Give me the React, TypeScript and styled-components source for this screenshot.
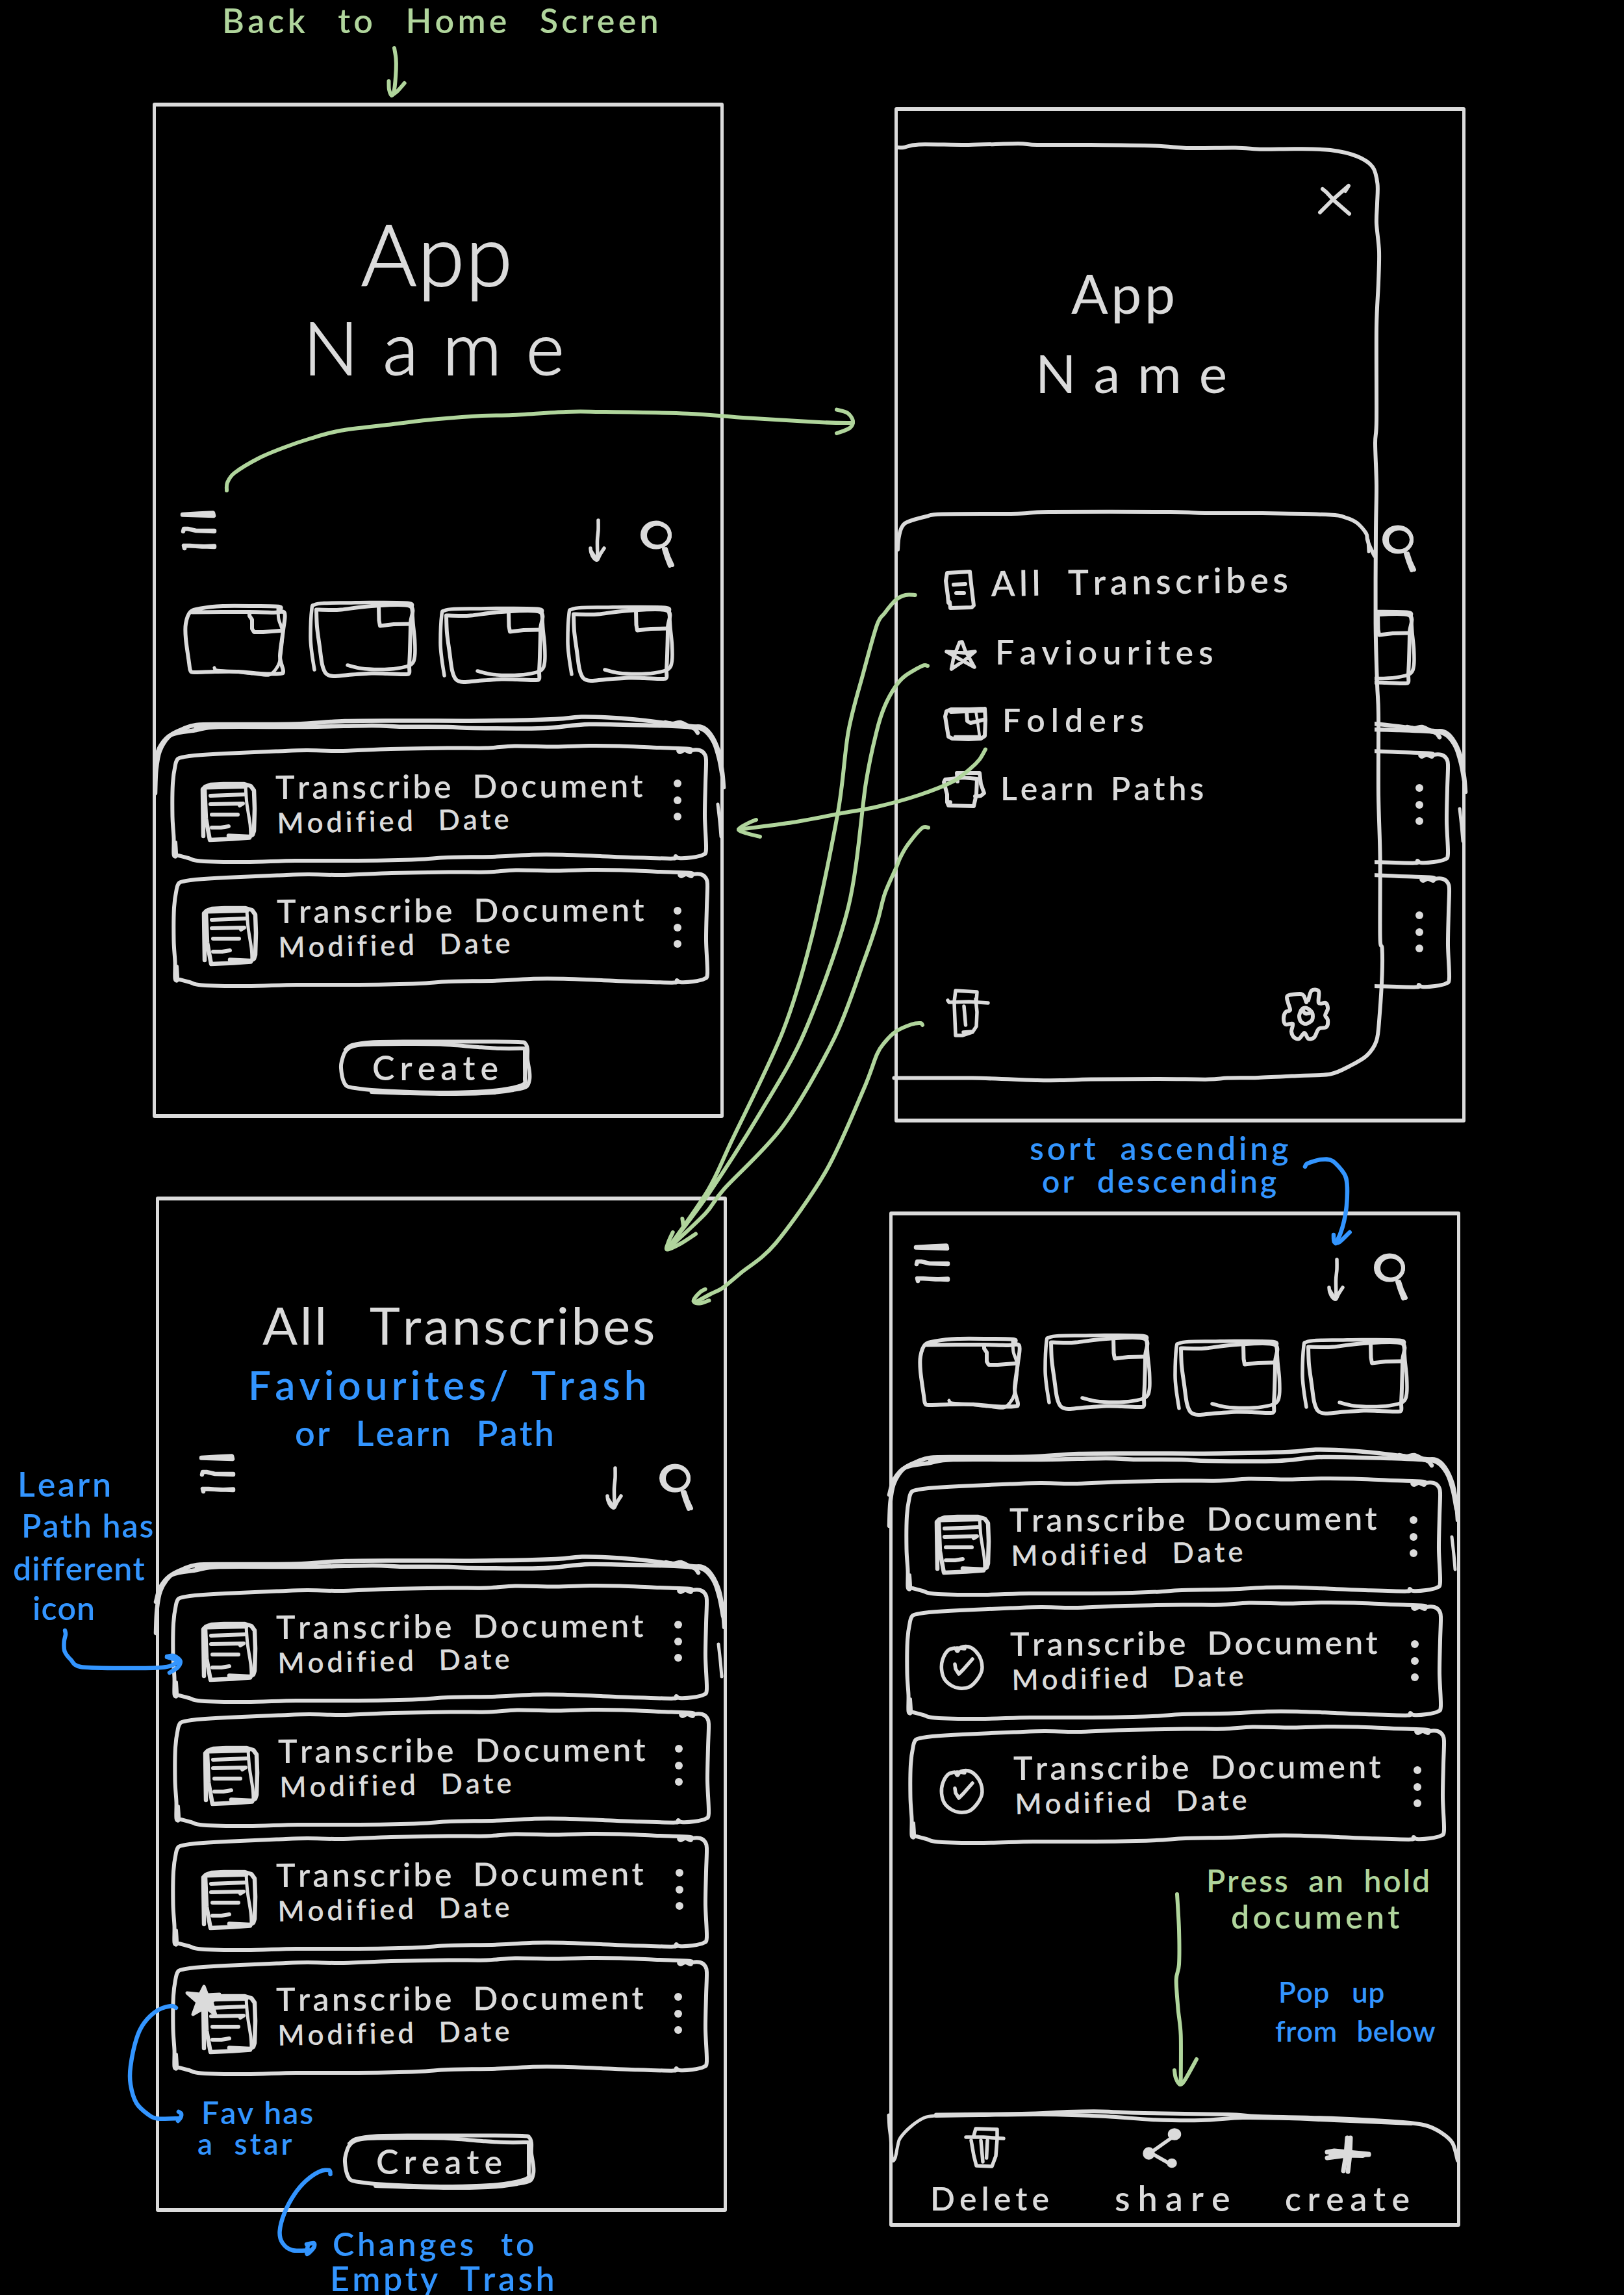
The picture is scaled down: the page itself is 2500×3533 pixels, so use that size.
import React from "react";
import styled, { createGlobalStyle } from "styled-components";

const CHALK = "#dbdbdb";
const GREEN = "#b0d59c";
const BLUE = "#3395ff";

const GlobalStyle = createGlobalStyle`
  html, body { margin: 0; padding: 0; background: #000; }
  *, *::before, *::after { box-sizing: border-box; }
`;

/* ---------- pen strokes ---------- */

const toPoints = (src: string) =>
  src.trim().split(/\s+/).map((p) => p.split(",").map(Number) as [number, number]);

/** Catmull-Rom spline through a list of "x,y" points. */
const spline = (src: string) => {
  const p = toPoints(src);
  const k = 6.5;
  let d = `M${p[0][0]} ${p[0][1]}`;
  for (let i = 0; i < p.length - 1; i++) {
    const a = p[i - 1] ?? p[i];
    const b = p[i];
    const c = p[i + 1];
    const e = p[i + 2] ?? c;
    d += ` C${b[0] + (c[0] - a[0]) / k} ${b[1] + (c[1] - a[1]) / k} ${c[0] - (e[0] - b[0]) / k} ${
      c[1] - (e[1] - b[1]) / k
    } ${c[0]} ${c[1]}`;
  }
  return d;
};

const straight = (src: string) => "M" + toPoints(src).map((q) => q.join(" ")).join(" L");

const Drawing = styled.svg<{ $w: number; $h: number; $ink?: string; $pen?: number }>`
  display: block;
  flex: none;
  width: ${(p) => p.$w}px;
  height: ${(p) => p.$h}px;
  overflow: visible;
  fill: none;
  stroke: ${(p) => p.$ink ?? CHALK};
  stroke-width: ${(p) => p.$pen ?? 6};
  stroke-linecap: round;
  stroke-linejoin: round;
`;

const Backdrop = styled(Drawing)`
  position: absolute;
  left: 0;
  top: 0;
  pointer-events: none;
`;

const Curve = ({ at, w }: { at: string; w?: number }) => <path d={spline(at)} strokeWidth={w} />;
const Line = ({ at, w }: { at: string; w?: number }) => <path d={straight(at)} strokeWidth={w} />;

/* ---------- icons ---------- */

const MenuIcon = () => (
  <Drawing $w={58} $h={62} $pen={6.5}>
    <Line at="5,6 30,4.5 52,3.5 53,8 5,6.5" />
    <Line at="6,32 7,28 13,28 26,31 54,31 54,32 26,31" />
    <Line at="8,58 7,54 16,54 35,55.5 54,54.5 54,56 10,54" />
  </Drawing>
);

const DownIcon = () => (
  <Drawing $w={30} $h={66} $pen={5.5}>
    <Curve at="16,2 16,17 14.5,34 15,60" />
    <Curve at="4,45 5,52 9,60 14.5,63 18,56 25,45" />
    <Line at="5,48 12,59" w={4} />
  </Drawing>
);

const SearchIcon = () => (
  <Drawing $w={54} $h={73}>
    <ellipse cx={25} cy={21.5} rx={21} ry={19} />
    <ellipse cx={27} cy={22} rx={19} ry={17.5} />
    <Line at="37,43 41,56 46,69" />
    <Line at="40,43 44,55 50,68" />
  </Drawing>
);

const DocIcon = () => (
  <Drawing $w={86} $h={93} $pen={6.5}>
    <Line at="5,84 4.5,50 4,12 8,8 16,5 36,4 68,4 78,7 83,14 84,42 83,76 81,82 76,85 44,83.5" />
    <Line at="7,12 9,57 15,90 49,88.5 76,86.5" />
    <Curve at="70,8 72,34 77,66 78,84" w={5} />
    <Line at="8,9 70,7.5" w={7} />
    <Line at="16,22 68,20" w={6} />
    <Line at="16,35 66,34 61,37" w={6} />
    <Line at="18,51 58,51" w={6} />
    <Line at="18,71 32,71 44,69" w={6} />
  </Drawing>
);

const StarMark = styled.svg`
  position: absolute;
  left: 20px;
  top: 43px;
  width: 56px;
  height: 50px;
  overflow: visible;
  fill: ${CHALK};
  stroke: ${CHALK};
  stroke-width: 5;
  stroke-linejoin: round;
`;

const CheckIcon = () => (
  <Drawing $w={67} $h={68} $pen={5.5}>
    <Curve at="22,4 12,8 4,22 2.5,37 7,52 18,62 30,66 45,64 57,53 64.5,38 63,22 55,9 44,2 32,3 27,9 25,4 38,5" />
    <Line at="23,29 24,36 29,44 36,37 50,21" />
  </Drawing>
);

const CloseIcon = () => (
  <Drawing $w={50} $h={48}>
    <Line at="6,7 12,12 24,25 47,45" />
    <Line at="2,43 22,23 46,2 41,10" />
  </Drawing>
);

const ListIcon = () => (
  <Drawing $w={50} $h={62} $pen={6}>
    <Line at="10,50 8,51 7,40 4,17 6,5 41,3 43,22 47,55 44,58 11,59 10,50" />
    <Line at="16,23 34,22" />
    <Line at="20,36 32,36" />
  </Drawing>
);

const StarIcon = () => (
  <Drawing $w={50} $h={48} $pen={5.5}>
    <Line at="10.6,45 14,27 23,4 27,3 32,17 46,42 22,29 3,18 30,20 47,18 30,32 10.6,45" />
  </Drawing>
);

const FolderMiniIcon = () => (
  <Drawing $w={68} $h={52} $pen={6}>
    <Line at="64,3 40,4 12,4 5,7 3,15 8,46 14,49 39,50 58,49 64,45 65,20 64,3" />
    <Line at="12,8 60,6" />
    <Line at="36,7 37,22 42,25 62,20" />
    <Line at="50,6 53,24 56,46 18,46" w={4.5} />
  </Drawing>
);

const PagesIcon = () => (
  <Drawing $w={68} $h={57} $pen={6}>
    <Line at="14,48 9,48 11,53 50,54 54,36 55,12 34,10 6,13 4,17 9,36 9,48" />
    <Line at="25,16 24,3 59,3 61,20 66,34 61,38 52,39" />
  </Drawing>
);

const BinIcon = () => (
  <Drawing $w={68} $h={76} $pen={5.5}>
    <Line at="13,20 15,3 48,5 47,19" />
    <Line at="3,18 5,21 36,20 65,22" />
    <Line at="13,23 15,72 26,72 41,67 47,58 48,36 46,16" />
    <Line at="28,27 30.5,56" />
    <Line at="27,67 41,66" />
  </Drawing>
);

const GearIcon = () => (
  <Drawing $w={74} $h={80} $pen={6}>
    <Curve at="38,21 34,11 28,8 9,11 10,22 13,33 6,36 3,46 6,55 17,54 15,66 19,75 27,77 35,68 41,77 50,75 57,62 69,59 71,48 67,41 71,31 68,22 57,22 57,4 46,3 41,18" />
    <Curve at="30,33 27,42 30,51 38,54 47,48 47,37 39,30 32,31 36,38 42,38" />
  </Drawing>
);

const DeleteIcon = () => (
  <Drawing $w={64} $h={64} $pen={5.5}>
    <Line at="15,14 18,3 51,4 51,16" />
    <Line at="3,16 30,16 61,18" />
    <Line at="11,21 15,44 19,60 43,61 49,45 51,19" />
    <Line at="26,21 29,54" />
    <Line at="36,21 34.6,48" />
  </Drawing>
);

const ShareIcon = () => (
  <Drawing $w={60} $h={62} $pen={5.5}>
    <Line at="46,14 12,38 42,55" />
    <ellipse cx={49} cy={9.5} rx={7.5} ry={6.5} fill={CHALK} />
    <ellipse cx={9.5} cy={39} rx={6.5} ry={7} fill={CHALK} />
    <ellipse cx={45} cy={54} rx={5} ry={4.5} fill={CHALK} />
  </Drawing>
);

const PlusIcon = () => (
  <Drawing $w={73} $h={60} $pen={7}>
    <Line at="36,4 34,30 30,55" />
    <Line at="41,4 40,30 37,56" />
    <Line at="5,26 16,24 69,29" />
    <Line at="5,35 35,31 69,30" />
    <Line at="12,29 60,30" w={10} />
  </Drawing>
);

/* ---------- text ---------- */

const Hand = styled.p<{
  $size: number;
  $line: number;
  $track?: number;
  $word?: number;
  $weight?: number;
  $outline?: number;
  $left?: number;
  $top?: number;
  $tilt?: number;
  $ink?: string;
}>`
  margin: ${(p) => p.$top ?? 0}px 0 0 ${(p) => p.$left ?? 0}px;
  font-family: Lato, "Open Sans", sans-serif;
  font-size: ${(p) => p.$size}px;
  font-weight: ${(p) => p.$weight ?? 600};
  line-height: ${(p) => p.$line}px;
  letter-spacing: ${(p) => p.$track ?? 0}px;
  word-spacing: ${(p) => p.$word ?? 0}px;
  font-kerning: none;
  white-space: nowrap;
  color: ${(p) => p.$ink ?? CHALK};
  -webkit-text-stroke: ${(p) => p.$outline ?? 0}px ${(p) => p.$ink ?? CHALK};
  ${(p) => (p.$tilt ? `transform: rotate(${p.$tilt}deg); transform-origin: 0 100%;` : "")}
`;

/* ---------- board ---------- */

const Board = styled.main`
  position: relative;
  display: flex;
  gap: 264px;
  width: 2500px;
  height: 3533px;
  padding: 158px 0 0 235px;
  overflow: hidden;
  background: #000;
`;

const Column = styled.div<{ $top: number; $gap: number }>`
  display: flex;
  flex-direction: column;
  flex: none;
  gap: ${(p) => p.$gap}px;
  width: 878px;
  padding-top: ${(p) => p.$top}px;
`;

const Frame = styled.section<{ $shift?: number }>`
  position: relative;
  display: flex;
  flex: none;
  flex-direction: column;
  width: 879px;
  height: 1563px;
  margin-left: ${(p) => p.$shift ?? 0}px;
  border: 6px solid ${CHALK};
  border-width: 6px 5px 6px 5px;
  border-radius: 3px;
`;

const Hero = styled.header`
  display: flex;
  flex-direction: column;
  height: 622px;
  padding-top: 156px;
`;

const Heading = styled.header`
  display: flex;
  flex-direction: column;
  height: 390px;
  padding-top: 143px;
`;

const Toolbar = styled.nav<{ $top?: number; $left: number; $right: number; $gap: number }>`
  display: flex;
  flex: none;
  align-items: flex-start;
  gap: ${(p) => p.$gap}px;
  height: 90px;
  margin-top: ${(p) => p.$top ?? 0}px;
  padding: 0 ${(p) => p.$right}px 0 ${(p) => p.$left}px;
`;

const ToolSlot = styled.span<{ $top?: number; $push?: boolean }>`
  display: block;
  padding-top: ${(p) => p.$top ?? 0}px;
  margin-left: ${(p) => (p.$push ? "auto" : "0")};
`;

const FolderRow = styled.div<{ $left: number }>`
  display: flex;
  flex: none;
  align-items: flex-start;
  height: 128px;
  margin-top: 49px;
  padding-left: ${(p) => p.$left}px;
`;

const FolderSlot = styled.span<{ $gap: number; $top: number }>`
  display: block;
  margin: ${(p) => p.$top}px 0 0 ${(p) => p.$gap}px;
`;

const FirstFolder = () => (
  <Drawing $w={160} $h={112} $pen={6}>
    <Curve at="149,10 149,4 110,3 62,3 27,6.7 12,12 5,30 5,53 10,90 12,102 18,105 50,104 86,104 120,107 150,107 155,103 150,80 155,40 157,13.5 140,13 103,12 60,12 15,12.5" />
    <Curve at="147,5 148,23 154,43 152,70 149,90 143,101 133,109 109,107 80,104 53,102 49,98" w={5} />
    <Line at="103,14 103,18 107,24 107,38 110,43 124,43 150,41" />
  </Drawing>
);

const Folder = () => (
  <Drawing $w={166} $h={120} $pen={6}>
    <Curve at="8,106 4,80 2,55 4,12 8,6 23,3.5 60,3 96,2.5 153,3.5 158,12 160,35 162.5,60 162.5,85 157,98 135,104 108,105.5 80,104 59,99" w={5.5} />
    <Curve at="11,13.5 30,14 49,13.5 96,8 155,8 156,35 155,78 154,100 154,111 148,113 120,112 96,111.5 60,114 37.5,116 26,112 20,98 16,70 12,40 11,13.5" />
    <Line at="107,8 107.5,30 109,38.5 130,36 155,35.6" />
  </Drawing>
);

const folderSlots = [
  { gap: 0, top: 5 },
  { gap: 35, top: 0 },
  { gap: 34, top: 9 },
  { gap: 30, top: 7 },
];

const Folders = ({ left }: { left: number }) => (
  <FolderRow $left={left}>
    {folderSlots.map((s, i) => (
      <FolderSlot key={i} $gap={s.gap} $top={s.top}>
        {i === 0 ? <FirstFolder /> : <Folder />}
      </FolderSlot>
    ))}
  </FolderRow>
);

const Tools = (props: { top?: number; left: number; right: number; gap: number; drop: number }) => (
  <Toolbar $top={props.top} $left={props.left} $right={props.right} $gap={props.gap}>
    <ToolSlot><MenuIcon /></ToolSlot>
    <ToolSlot $top={props.drop} $push><DownIcon /></ToolSlot>
    <ToolSlot $top={16}><SearchIcon /></ToolSlot>
  </Toolbar>
);

const Sheet = styled.div<{ $top: number; $left: number }>`
  position: relative;
  display: flex;
  flex: none;
  flex-direction: column;
  gap: 8px;
  width: 878px;
  margin: ${(p) => p.$top}px 0 0 ${(p) => p.$left}px;
  padding: 46px 0 0 29px;
`;

const SheetEdge = () => (
  <Backdrop $w={878} $h={200} $pen={6.5}>
    <Curve at="4,121 5.5,85 11,56 26,33 47,22 67,16 114,15 220,14.5 296,10 396,9.5 513,9.5 619,7 660,3.5 701,4.5 742,7.5 789,13 830,20 839,28" />
    <Curve at="4,73 11,50 29,31 67,24 102,19 237,19 337,17 384,18.7 454,19 496,21 601,21 672,15 777,17 824,19 845,19 859,30.5 871,56 877,89 879,112" />
    <Curve at="67,19 110,16 230,17" w={7} />
    <Curve at="789,12 801,14 812,12 824,17 836,19 851,25.5 864,43 872,68 877,95" />
    <Curve at="870,138 873,165 875,188" w={5} />
  </Backdrop>
);

const Card = styled.article<{ $nudge?: number }>`
  position: relative;
  display: flex;
  flex: none;
  align-items: flex-start;
  width: 826px;
  height: 183px;
  margin-left: ${(p) => p.$nudge ?? 0}px;
`;

const CardEdge = () => (
  <Backdrop $w={826} $h={183} $pen={6}>
    <Curve at="6,151 7,171 3.5,169 3.5,144 1.5,111 2,60 6,31 10,22 18,19.5 35,17 82,14 161,10.6 208,9 261,10 337,7 425,5.5 484,5.5 528,2.5 590,3.5 643,2 690,2.5 742,4.7 793,6.4 798,8 781,9 783,12 790,9 798,12 801,9 813,9 820,14 823,24 822,60 821,111 823,161 818,170 801,174 781,175 776,172 772,175.6 707,174 660,172 602,169.7 555,169.7 502,172.6 425,174 390,176.4 349,178 285,179 191,179 114,181 44,179.4 26,175 7,170" />
  </Backdrop>
);

const CardIcon = styled.div<{ $x: number; $y: number }>`
  flex: none;
  width: 160px;
  padding: ${(p) => p.$y}px 0 0 ${(p) => p.$x}px;
`;

const CardText = styled.div`
  flex: none;
  width: 609px;
  padding-top: 37px;
`;

const Dots = styled.div<{ $top: number; $left: number }>`
  display: flex;
  flex-direction: column;
  gap: 13.5px;
  padding: ${(p) => p.$top}px 0 0 ${(p) => p.$left}px;

  i {
    width: 12px;
    height: 12px;
    border-radius: 50%;
    background: ${CHALK};
  }
`;

type DocProps = {
  kind?: "doc" | "check";
  starred?: boolean;
  blank?: boolean;
  nudge?: number;
  dots?: number;
  dotX?: number;
  checkX?: number;
};

const DocumentCard = ({ kind = "doc", starred, blank, nudge, dots = 54, dotX = 4, checkX = 52 }: DocProps) => (
  <Card $nudge={nudge}>
    <CardEdge />
    <CardIcon $x={kind === "doc" ? 44 : checkX} $y={kind === "doc" ? 57 : 68}>
      {!blank && (kind === "doc" ? <DocIcon /> : <CheckIcon />)}
    </CardIcon>
    {starred && (
      <StarMark>
        <path d="M29 3 L34 16 L53 15 L41 27 L47 47 L31 35 L12 46 L19 27 L3 13 L23 15 Z" />
      </StarMark>
    )}
    <CardText>
      {!blank && (
        <>
          <Hand $size={50} $line={56} $track={4.2} $word={12} $tilt={-0.3}>Transcribe Document</Hand>
          <Hand $size={44} $line={50} $track={4.7} $word={18} $left={3} $top={2} $tilt={-1.1}>Modified Date</Hand>
        </>
      )}
    </CardText>
    <Dots $top={dots} $left={dotX}>
      <i /><i /><i />
    </Dots>
  </Card>
);

const CreateButton = styled.button<{ $top: number; $left: number }>`
  position: relative;
  flex: none;
  width: 298px;
  height: 87px;
  margin: ${(p) => p.$top}px 0 0 ${(p) => p.$left}px;
  padding: 0 0 0 53px;
  border: 0;
  background: transparent;
  text-align: left;
`;

const Create = ({ top, left }: { top: number; left: number }) => (
  <CreateButton $top={top} $left={left}>
    <Backdrop $w={298} $h={87} $pen={6}>
      <Curve at="288,14 250,14 216,12 158,7.5 100,7 40,8 20,12 11,20 6,34 5,44 8,62 14,72 30,75.5 52,78 111,81 170,82 228,80 262,76 286,69 288,60 288,40 288,23 288,14" />
      <Curve at="12,16 22,9 52,4.5 111,3.5 200,3.5 278,4 289,7 292,15 292,31 295,50 295,62 290,73 270,78 240,82 181,84 111,83 52,81" />
    </Backdrop>
    <Hand as="span" $size={52} $line={87} $track={8}>Create</Hand>
  </CreateButton>
);

/* ---------- screens ---------- */

/** `covered` leaves out whatever the open drawer hides. */
const HomeContent = ({ covered }: { covered?: boolean }) => (
  <>
    <Hero>
      {!covered && (
        <>
          <Hand $size={130} $line={140} $weight={300} $outline={2} $left={316} $track={2}>App</Hand>
          <Hand $size={112} $line={130} $weight={300} $outline={2} $left={227} $top={9} $track={38}>Name</Hand>
        </>
      )}
    </Hero>
    <Tools left={36} right={70} gap={50} drop={13} />
    <Folders left={41} />
    <Sheet $top={47} $left={-5}>
      <SheetEdge />
      <DocumentCard blank={covered} />
      <DocumentCard blank={covered} nudge={2} dots={59} dotX={2} />
    </Sheet>
    {!covered && <Create top={80} left={280} />}
  </>
);

const Drawer = styled.aside`
  position: absolute;
  left: 0;
  top: 0;
  display: flex;
  flex-direction: column;
  width: 734px;
  height: 1500px;
  padding-top: 113px;
  background: #000;
`;

const DrawerEdge = styled(Backdrop)`
  left: -5px;
  top: -6px;
`;

const CloseRow = styled.div`
  display: flex;
  justify-content: flex-end;
  padding-right: 36px;
`;

const DrawerTitle = styled.div`
  margin-top: 69px;
`;

const MenuList = styled.ul`
  display: flex;
  flex-direction: column;
  gap: 41px;
  margin: 243px 0 0;
  padding: 0 0 0 66px;
  list-style: none;
`;

const MenuItem = styled.li`
  display: flex;
  align-items: center;
  height: 64px;
`;

const MenuGlyph = styled.span<{ $x: number; $y: number }>`
  flex: none;
  width: 70px;
  padding: ${(p) => p.$y}px 0 0 ${(p) => p.$x}px;
`;

const DrawerFooter = styled.div`
  display: flex;
  justify-content: space-between;
  margin-top: 277px;
  padding: 0 69px 0 74px;
`;

const menu = [
  { icon: <ListIcon />, x: 4, y: 20, label: "All Transcribes", left: 8, size: 54, track: 6.4, word: 16, tilt: -0.8 },
  { icon: <StarIcon />, x: 6, y: 12, label: "Faviourites", left: 14, size: 52, track: 8, word: 0, tilt: 0 },
  { icon: <FolderMiniIcon />, x: 4, y: 12, label: "Folders", left: 25, size: 50, track: 9, word: 0, tilt: 0 },
  { icon: <PagesIcon />, x: 1, y: 4, label: "Learn Paths", left: 22, size: 50, track: 4.9, word: 4, tilt: 0 },
];

const DrawerPanel = () => (
  <Drawer>
    <DrawerEdge $w={760} $h={1510} $pen={6}>
      <Curve at="5,62 14,62 37.5,57.4 114,58 190,56 219.5,58 302,58 401,59.5 454,63 525,62.6 566,64.8 618.5,64.3 671,66 712,75.6 736,92 743.5,118 743,148.5 742,179 746,222 745,270 742,339 742,482 740,517 742,582 741,655 740.6,795 743,888 745,934 745,1059 747.6,1155 747.6,1278 750.6,1294.6 750.6,1335 746.5,1401 742,1437 727,1460 701,1476 671,1488.5 624,1491 560,1494 513,1494.6 483.5,1496.6 407,1496 302,1496.6 260.6,1498 219.5,1498 120,1494.6 -0.6,1494.6" />
      <Curve at="5,681 6.5,663 11,647 20,638.6 49,630 73,626.4 190,625.7 237,623 425,623 478,625 566,625 671,627.5 695,632 712,640 726,656 728,666 732,677 739,691" />
      <Line at="729,666 730,684" w={5} />
    </DrawerEdge>
    <CloseRow><CloseIcon /></CloseRow>
    <DrawerTitle>
      <Hand $size={84} $line={100} $weight={400} $left={267} $track={4.5}>App</Hand>
      <Hand $size={82} $line={100} $weight={400} $left={212} $top={22} $track={27}>Name</Hand>
    </DrawerTitle>
    <MenuList>
      {menu.map((m) => (
        <MenuItem key={m.label}>
          <MenuGlyph $x={m.x} $y={m.y}>{m.icon}</MenuGlyph>
          <Hand as="span" $size={m.size} $line={64} $left={m.left} $track={m.track} $word={m.word} $tilt={m.tilt}>
            {m.label}
          </Hand>
        </MenuItem>
      ))}
    </MenuList>
    <DrawerFooter>
      <BinIcon />
      <GearIcon />
    </DrawerFooter>
  </Drawer>
);

const ActionBar = styled.footer`
  position: relative;
  display: flex;
  flex: none;
  height: 177px;
  margin: auto -5px 0;
  padding: 29px 0 0 63px;
`;

const Action = styled.div<{ $w: number }>`
  flex: none;
  width: ${(p) => p.$w}px;
`;

const ActionIcon = styled.div<{ $x: number; $y: number }>`
  height: 80px;
  padding: ${(p) => p.$y}px 0 0 ${(p) => p.$x}px;
`;

/* ---------- annotations ---------- */

const Note = styled.div<{ $x: number; $y: number }>`
  position: absolute;
  left: ${(p) => p.$x}px;
  top: ${(p) => p.$y}px;
`;

const greenArrows = [
  "607,74 609.5,90 609.7,107 607,138 603,147 599,138 598.5,125",
  "622.6,128 612,140 603,147",
  "349,755 350,743 361,728 399,705 437,689 478,675 525,662.7 595.6,654 666,645.7 742,640 789,639 871,634 924,634 1059,636.7 1140,642.7 1261,650 1313,651",
  "1288,630.6 1305,636 1313,648 1308,659 1288,667",
  "1408.7,916 1394,916 1379,923.6 1361.7,944 1350,962 1329,1036 1306,1126 1290,1250 1250,1441 1205,1588 1126,1757 1090,1832 1029,1921",
  "1428,1025 1420,1025 1394,1040 1379,1056 1362,1087 1350,1124 1333,1205 1306,1396 1239,1588 1171,1712 1092,1836 1034,1914",
  "1517,1153.6 1508,1169 1494,1183 1467,1203 1414.6,1224 1350,1242 1295,1252 1220,1266 1137,1277",
  "1164,1262 1150,1268 1137,1277 1150,1283 1170,1288",
  "1429,1274 1419,1275 1397,1301 1386,1320 1379,1337 1362,1376 1350,1421 1329,1482 1284,1599 1205,1734 1115,1830 1086,1868 1031,1920",
  "1035.7,1897 1029,1912 1027,1923.6 1048.6,1914 1071,1899.5",
  "1050.4,1876 1052,1887",
  "1420,1578 1417,1575 1403,1577 1379,1588 1362,1604.5 1350,1623 1329,1678 1272,1802 1194,1914 1140,1960 1112,1983 1094,1992 1072,2004",
  "1085.6,1984.6 1078,1989 1068,2001 1071,2006 1080,2006 1091.5,2002",
  "1812,2916 1815,2970.5 1815,3024 1810.7,3047.6 1813.6,3093 1817.7,3132.6 1817.7,3205.8",
  "1808,3187 1810,3199 1816.5,3209 1824,3202 1842,3170",
];

const blueArrows = [
  "2009,1796 2013,1791 2033.7,1785 2051,1787 2069,1806.5 2073.6,1823 2073,1855.5 2069,1880 2063,1900 2056,1914",
  "2053,1901 2054,1912 2062,1912 2077.7,1897",
  "100,2510 101,2516 98.7,2527 99.5,2542 109,2555 124,2566 184,2568 249,2567 268,2562 272,2556 257,2551",
  "257,2550 268,2549 277.5,2556.7 273.6,2566.7 261,2575",
  "271,3091 264,3088 243,3094.6 222,3114 210,3138.7 201,3181 201,3209 210,3237.5 228,3255 243,3261.5 277,3261",
  "275,3251 279,3254 278,3260 274,3265",
  "508.5,3347 506.7,3341 491.8,3343 470.8,3357.4 452.8,3378.6 437.8,3407 430.6,3435 434.8,3452.7 449.8,3464 476,3464.3",
  "472,3455 483,3453 483,3460 472.6,3470 474,3456",
];

const Strokes = () => (
  <>
    <Backdrop $w={2500} $h={3533} $ink={GREEN} $pen={6}>
      {greenArrows.map((a) => <Curve key={a} at={a} />)}
    </Backdrop>
    <Backdrop $w={2500} $h={3533} $ink={BLUE} $pen={6.5}>
      {blueArrows.map((a) => <Curve key={a} at={a} />)}
    </Backdrop>
  </>
);

const Notes = () => (
  <>
    <Note $x={342} $y={1}>
      <Hand $ink={GREEN} $size={52} $line={60} $track={5.2} $word={27}>Back to Home Screen</Hand>
    </Note>
    <Note $x={1585} $y={1737}>
      <Hand $ink={BLUE} $size={50} $line={60} $track={4.8} $word={16}>sort ascending</Hand>
      <Hand $ink={BLUE} $size={48} $line={42} $left={19} $track={4} $word={16}>or descending</Hand>
    </Note>
    <Note $x={22} $y={2253}>
      <Hand $ink={BLUE} $size={52} $line={62} $left={5} $track={3.8}>Learn</Hand>
      <Hand $ink={BLUE} $size={50} $line={66} $left={11} $track={2}>Path has</Hand>
      <Hand $ink={BLUE} $size={50} $line={66} $left={-2} $track={1.1}>different</Hand>
      <Hand $ink={BLUE} $size={50} $line={56} $left={28} $track={1}>icon</Hand>
    </Note>
    <Note $x={304} $y={3225}>
      <Hand $ink={BLUE} $size={48} $line={54} $left={6} $track={2}>Fav has</Hand>
      <Hand $ink={BLUE} $size={46} $line={42} $track={4} $word={14}>a star</Hand>
    </Note>
    <Note $x={510} $y={3426}>
      <Hand $ink={BLUE} $size={50} $line={56} $left={2} $track={4.7} $word={20}>Changes to</Hand>
      <Hand $ink={BLUE} $size={52} $line={50} $left={-2} $track={4.4} $word={12}>Empty Trash</Hand>
    </Note>
    <Note $x={1857} $y={2865}>
      <Hand $ink={GREEN} $size={48} $line={60} $track={2.8} $word={14}>Press an hold</Hand>
      <Hand $ink={GREEN} $size={50} $line={50} $left={38} $track={5.2}>document</Hand>
    </Note>
    <Note $x={1963} $y={3036}>
      <Hand $ink={BLUE} $size={44} $line={60} $left={5} $track={0.8} $word={22}>Pop up</Hand>
      <Hand $ink={BLUE} $size={44} $line={60} $track={0.6} $word={18}>from below</Hand>
    </Note>
  </>
);

export default function App() {
  return (
    <>
      <GlobalStyle />
      <Board>
        <Column $top={0} $gap={121}>
          <Frame>
            <HomeContent />
          </Frame>
          <Frame $shift={5}>
            <Heading>
              <Hand $size={80} $line={96} $weight={400} $left={159} $track={3.6} $word={38}>All Transcribes</Hand>
              <Hand $ink={BLUE} $size={62} $line={80} $top={4} $left={137} $track={6.1} $word={8}>Faviourites/ Trash</Hand>
              <Hand $ink={BLUE} $size={54} $line={66} $top={2} $left={209} $track={3.1} $word={20}>or Learn Path</Hand>
            </Heading>
            <Tools left={60} right={46} gap={53} drop={20} />
            <Sheet $top={65} $left={-9}>
              <SheetEdge />
              <DocumentCard dots={56} />
              <DocumentCard nudge={3} dots={56} dotX={2} />
              <DocumentCard dots={56} dotX={6} />
              <DocumentCard starred dots={56} />
            </Sheet>
            <Create top={89} left={281} />
          </Frame>
        </Column>
        <Column $top={7} $gap={137}>
          <Frame>
            <HomeContent covered />
            <DrawerPanel />
          </Frame>
          <Frame $shift={-8}>
            <Tools top={43} left={31} right={75} gap={42} drop={23} />
            <Folders left={38} />
            <Sheet $top={47} $left={-9}>
              <SheetEdge />
              <DocumentCard dots={60} dotX={7} />
              <DocumentCard kind="check" nudge={1} dots={60} dotX={8} />
              <DocumentCard kind="check" nudge={6} dots={63} dotX={7} checkX={47} />
            </Sheet>
            <ActionBar>
              <Backdrop $w={878} $h={177} $pen={6}>
                <Curve at="-1,11 0,30 2,46 4.5,79 9,77 13,58 17,46 34,28 54,15 72,12" w={5} />
                <Curve at="72,10.5 204,9 274,6 327,5.4 392,8 521,10 568,13 685,16 791,22 826,27 849.5,38 867,54 875,81" />
                <Curve at="72,12 139.5,11 233,10 333,13 403.5,18 480,19 544,15 615,16 685,19 803,24" />
              </Backdrop>
              <Action $w={281}>
                <ActionIcon $x={52} $y={0}><DeleteIcon /></ActionIcon>
                <Hand $size={50} $line={60} $track={7}>Delete</Hand>
              </Action>
              <Action $w={265}>
                <ActionIcon $x={46} $y={2}><ShareIcon /></ActionIcon>
                <Hand $size={54} $line={60} $left={3} $track={12}>share</Hand>
              </Action>
              <Action $w={200}>
                <ActionIcon $x={60} $y={13}><PlusIcon /></ActionIcon>
                <Hand $size={52} $line={60} $track={9.5}>create</Hand>
              </Action>
            </ActionBar>
          </Frame>
        </Column>
        <Strokes />
        <Notes />
      </Board>
    </>
  );
}
